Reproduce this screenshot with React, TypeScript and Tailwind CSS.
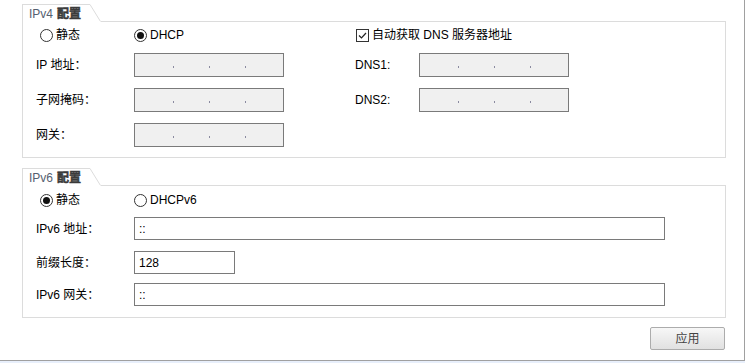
import React from "react";

const font = { fontFamily: '"Liberation Sans", "Noto Sans CJK SC", sans-serif' };

function Radio({ checked, label }: { checked?: boolean; label: string }) {
  return (
    <div className="flex items-center h-[13px]">
      <div className="w-[13px] h-[13px] rounded-full border border-[#333] bg-white flex items-center justify-center">
        {checked && <div className="w-[7px] h-[7px] rounded-full bg-[#111]" />}
      </div>
      <span className="ml-[3px] text-[12px] leading-[13px] text-black">{label}</span>
    </div>
  );
}

function Checkbox({ label }: { label: string }) {
  return (
    <div className="flex items-center h-[13px]">
      <div className="w-[13px] h-[13px] border border-[#333] bg-white flex items-center justify-center">
        <svg width="11" height="11" viewBox="0 0 11 11">
          <path d="M2 5.5 L4.5 8 L9 3" fill="none" stroke="#222" strokeWidth="1.2" />
        </svg>
      </div>
      <span className="ml-[3px] text-[12px] leading-[13px] text-black">{label}</span>
    </div>
  );
}

function IpBox() {
  return (
    <div className="w-[150px] h-[24px] border border-[#7a7a7a] bg-[#f0f0f0] flex items-center">
      <div className="w-[38px]" />
      <div className="w-[1px] h-[2px] bg-[#8a8aa0] mt-[3px]" />
      <div className="w-[35px]" />
      <div className="w-[1px] h-[2px] bg-[#8a8aa0] mt-[3px]" />
      <div className="w-[35px]" />
      <div className="w-[1px] h-[2px] bg-[#8a8aa0] mt-[3px]" />
    </div>
  );
}

function Label({ text, w }: { text: string; w: string }) {
  return <div className={`${w} text-[12px] text-black`}>{text}</div>;
}

function GroupHeader({ latin, cjk }: { latin: string; cjk: string }) {
  return (
    <div className="flex h-[18px]">
      <div className="w-[68px] h-[18px] border-l border-t border-[#dcdcdc] pl-[6px] flex items-center">
        <span className="text-[12px] text-[#556070] leading-[14px]">{latin}</span>
        <span className="text-[12px] text-[#3a3a3a] font-bold leading-[14px] ml-[4px] [-webkit-text-stroke:0.5px_#3a3a3a]">
          {cjk}
        </span>
      </div>
      <svg width="11" height="18" viewBox="0 0 11 18" className="block">
        <line x1="0" y1="0.5" x2="10.5" y2="17.5" stroke="#dcdcdc" strokeWidth="1" />
      </svg>
      <div className="flex-1 border-b border-[#dcdcdc]" />
    </div>
  );
}

export default function App() {
  return (
    <div className="w-[746px] h-[363px] bg-white flex flex-col" style={font}>
      <div className="w-[745px] h-[361px] border-r border-b border-[#a0a0a0] pt-[4px] pl-[22px]">
        <div className="w-[704px] flex flex-col">
          {/* IPv4 */}
          <GroupHeader latin="IPv4" cjk="配置" />
          <div className="border-l border-r border-b border-[#dcdcdc] h-[136px] pl-[13px] pt-[7px]">
            <div className="flex items-center h-[13px]">
              <div className="w-[98px] pl-[4px]">
                <Radio label="静态" />
              </div>
              <div className="w-[221px]">
                <Radio checked label="DHCP" />
              </div>
              <div className="pl-[1px]">
                <Checkbox label="自动获取 DNS 服务器地址" />
              </div>
            </div>
            <div className="flex items-center h-[24px] mt-[11px]">
              <Label text="IP 地址：" w="w-[98px]" />
              <IpBox />
              <div className="w-[71px]" />
              <Label text="DNS1:" w="w-[64px]" />
              <IpBox />
            </div>
            <div className="flex items-center h-[24px] mt-[11px]">
              <Label text="子网掩码：" w="w-[98px]" />
              <IpBox />
              <div className="w-[71px]" />
              <Label text="DNS2:" w="w-[64px]" />
              <IpBox />
            </div>
            <div className="flex items-center h-[24px] mt-[11px]">
              <Label text="网关：" w="w-[98px]" />
              <IpBox />
            </div>
          </div>

          {/* IPv6 */}
          <div className="mt-[10px]">
            <GroupHeader latin="IPv6" cjk="配置" />
          </div>
          <div className="border-l border-r border-b border-[#dcdcdc] h-[132px] pl-[13px] pt-[8px]">
            <div className="flex items-center h-[13px]">
              <div className="w-[98px] pl-[4px]">
                <Radio checked label="静态" />
              </div>
              <Radio label="DHCPv6" />
            </div>
            <div className="flex items-center h-[23px] mt-[10px]">
              <Label text="IPv6 地址：" w="w-[98px]" />
              <div className="w-[531px] h-[23px] border border-[#7a7a7a] bg-white pl-[4px] flex items-center text-[12px] text-black">
                ::
              </div>
            </div>
            <div className="flex items-center h-[23px] mt-[11px]">
              <Label text="前缀长度：" w="w-[98px]" />
              <div className="w-[101px] h-[23px] border border-[#7a7a7a] bg-white pl-[4px] flex items-center text-[12px] text-black">
                128
              </div>
            </div>
            <div className="flex items-center h-[23px] mt-[9px]">
              <Label text="IPv6 网关：" w="w-[98px]" />
              <div className="w-[531px] h-[23px] border border-[#7a7a7a] bg-white pl-[4px] flex items-center text-[12px] text-black">
                ::
              </div>
            </div>
          </div>

          <div className="flex justify-end mt-[9px] pr-[1px]">
            <div className="w-[75px] h-[23px] border border-[#acacac] rounded-[2px] bg-gradient-to-b from-[#f7f7f7] to-[#e1e1e1] flex items-center justify-center text-[12px] text-[#444]">
              应用
            </div>
          </div>
        </div>
      </div>
      <div className="h-[2px] w-[745px] bg-[#e8effb]" />
    </div>
  );
}
